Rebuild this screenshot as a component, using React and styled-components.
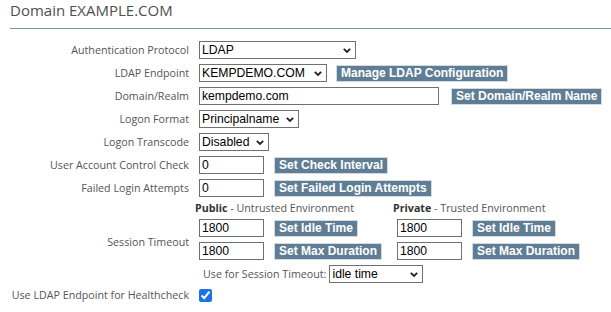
import styled, { createGlobalStyle } from 'styled-components';

const GlobalStyle = createGlobalStyle`
  body {
    margin: 0;
    background: #fff;
    font-family: 'Open Sans', sans-serif;
  }
`;

const Page = styled.div`
  width: 611px;
  height: 312px;
  padding-left: 10px;
  box-sizing: border-box;
  overflow: hidden;
`;

const Title = styled.h2`
  margin: 0;
  height: 28px;
  font-size: 15px;
  font-weight: 400;
  line-height: 20px;
  color: #4f4f4f;
`;

const Rule = styled.div`
  height: 1px;
  background: #7f97aa;
`;

const Form = styled.div`
  display: grid;
  grid-template-columns: 179px 1fr;
  column-gap: 10px;
  row-gap: 5px;
  align-items: center;
  margin-top: 12px;
`;

const Label = styled.div`
  font-size: 10.7px;
  color: #555;
  text-align: right;
  white-space: nowrap;
  line-height: 14px;
`;

const SessionLabel = styled(Label)`
  align-self: stretch;
  display: flex;
  align-items: center;
  justify-content: flex-end;
  padding-top: 22px;
`;

const Controls = styled.div`
  display: flex;
  align-items: center;
  gap: ${(p) => p.$gap || 10}px;
  padding-left: ${(p) => p.$indent || 0}px;
`;

const SelectWrap = styled.div`
  position: relative;
  width: ${(p) => p.$w}px;
  height: 18px;
  flex: none;

  svg {
    position: absolute;
    right: 5px;
    top: 7px;
    pointer-events: none;
  }
`;

const SelectBox = styled.select`
  display: block;
  appearance: none;
  width: 100%;
  height: 100%;
  box-sizing: border-box;
  margin: 0;
  padding: 0 14px 0 2px;
  border: 1px solid #707070;
  border-radius: 0;
  background: #fff;
  font-family: Arial, 'Liberation Sans', sans-serif;
  font-size: 12.2px;
  color: #000;
`;

const Input = styled.input`
  display: block;
  width: ${(p) => p.$w}px;
  height: 18px;
  box-sizing: border-box;
  margin: 0;
  padding: 0 2px;
  border: 1px solid #707070;
  font-family: Arial, 'Liberation Sans', sans-serif;
  font-size: 12.2px;
  color: #000;
`;

const Button = styled.button`
  height: 15px;
  margin: 0;
  padding: 0 4px;
  border: 0;
  box-shadow: 0 0 0 1px #d3dbe1;
  background: #5f7e95;
  color: #fff;
  font-family: Arial, 'Liberation Sans', sans-serif;
  font-weight: 700;
  font-size: 12px;
  line-height: 15px;
  white-space: nowrap;
`;

const SessionGrid = styled.div`
  display: grid;
  grid-template-columns: 198px 198px;
  row-gap: 5px;
  align-items: center;
`;

const EnvHeader = styled.div`
  margin-left: -4px;
  height: 12px;
  font-size: 10.7px;
  line-height: 12px;
  color: #555;
  white-space: nowrap;

  b {
    color: #333;
    font-weight: 700;
  }
`;

const InlineText = styled.span`
  font-size: 10.7px;
  color: #555;
  white-space: nowrap;
`;

const Check = styled.input`
  display: block;
  width: 13px;
  height: 13px;
  margin: 0;
  accent-color: #1a73e8;
`;

function Select({ w, value }) {
  return (
    <SelectWrap $w={w}>
      <SelectBox defaultValue={value}>
        <option>{value}</option>
      </SelectBox>
      <svg width="8" height="5" viewBox="0 0 8 5">
        <path d="M0.8 0.8L4 4L7.2 0.8" fill="none" stroke="#222" strokeWidth="1.8" />
      </svg>
    </SelectWrap>
  );
}

export default function App() {
  return (
    <Page>
      <GlobalStyle />
      <Title>Domain EXAMPLE.COM</Title>
      <Rule />
      <Form>
        <Label>Authentication Protocol</Label>
        <Controls>
          <Select w={157} value="LDAP" />
        </Controls>

        <Label>LDAP Endpoint</Label>
        <Controls>
          <Select w={128} value="KEMPDEMO.COM" />
          <Button>Manage LDAP Configuration</Button>
        </Controls>

        <Label>Domain/Realm</Label>
        <Controls $gap={13}>
          <Input $w={240} defaultValue="kempdemo.com" />
          <Button>Set Domain/Realm Name</Button>
        </Controls>

        <Label>Logon Format</Label>
        <Controls>
          <Select w={100} value="Principalname" />
        </Controls>

        <Label>Logon Transcode</Label>
        <Controls>
          <Select w={70} value="Disabled" />
        </Controls>

        <Label>User Account Control Check</Label>
        <Controls $gap={11}>
          <Input $w={65} defaultValue="0" />
          <Button>Set Check Interval</Button>
        </Controls>

        <Label>Failed Login Attempts</Label>
        <Controls $gap={11}>
          <Input $w={65} defaultValue="0" />
          <Button>Set Failed Login Attempts</Button>
        </Controls>

        <SessionLabel>Session Timeout</SessionLabel>
        <SessionGrid>
          <EnvHeader>
            <b>Public</b> - Untrusted Environment
          </EnvHeader>
          <EnvHeader>
            <b>Private</b> - Trusted Environment
          </EnvHeader>
          <Controls $gap={11}>
            <Input $w={65} defaultValue="1800" />
            <Button>Set Idle Time</Button>
          </Controls>
          <Controls $gap={11}>
            <Input $w={65} defaultValue="1800" />
            <Button>Set Idle Time</Button>
          </Controls>
          <Controls $gap={11}>
            <Input $w={65} defaultValue="1800" />
            <Button>Set Max Duration</Button>
          </Controls>
          <Controls $gap={11}>
            <Input $w={65} defaultValue="1800" />
            <Button>Set Max Duration</Button>
          </Controls>
        </SessionGrid>

        <span />
        <Controls $gap={3} $indent={4}>
          <InlineText>Use for Session Timeout:</InlineText>
          <Select w={94} value="idle time" />
        </Controls>

        <Label>Use LDAP Endpoint for Healthcheck</Label>
        <Controls>
          <Check type="checkbox" defaultChecked />
        </Controls>
      </Form>
    </Page>
  );
}
